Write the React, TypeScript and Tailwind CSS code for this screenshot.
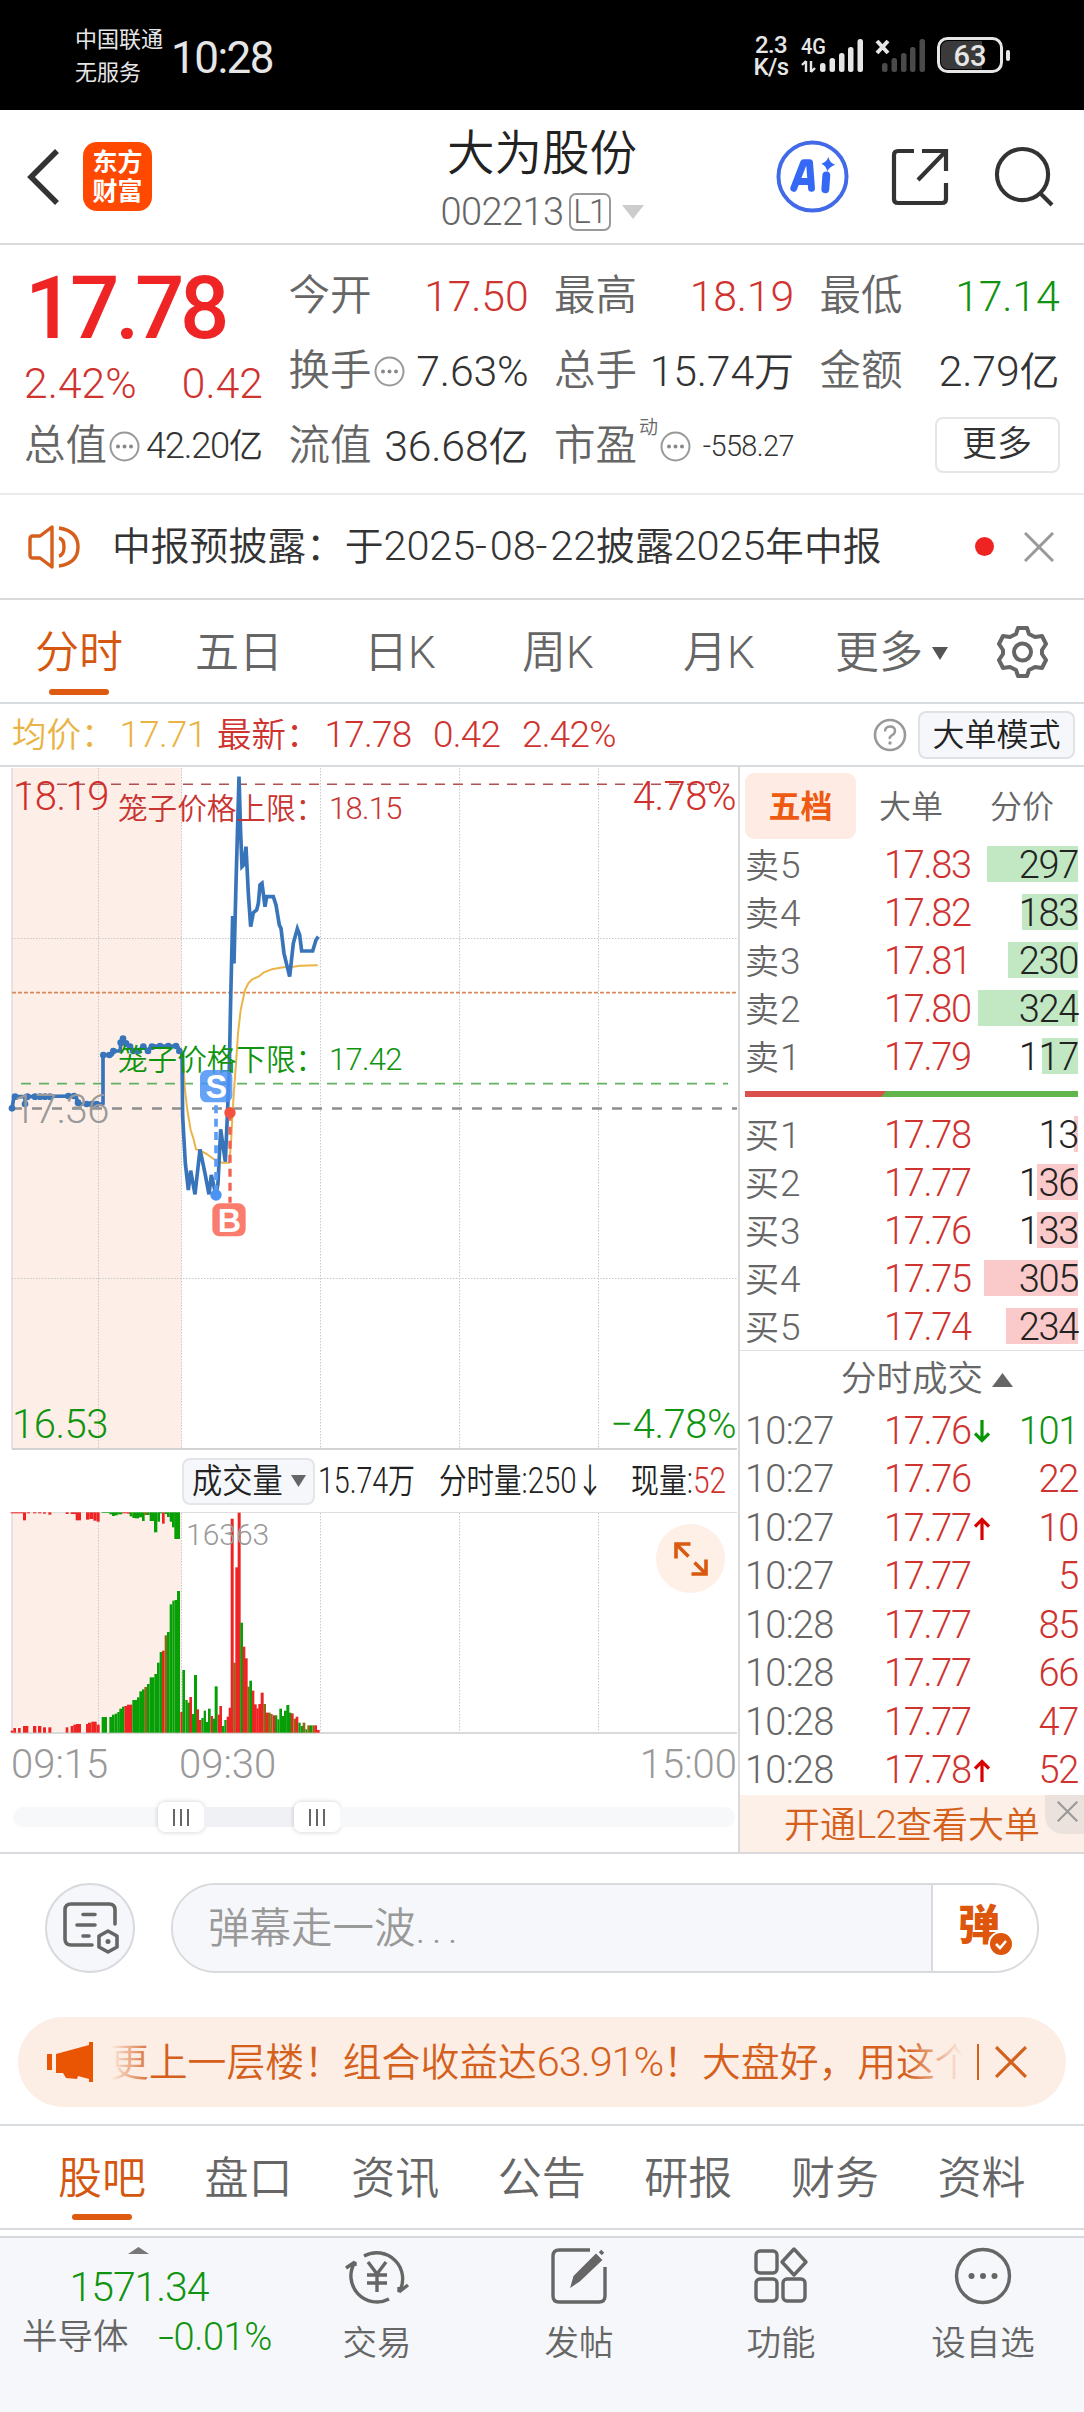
import React from "react";

type Bar = [number, number, number, "r" | "g" | "m"];

const BAR_FILL = { r: "#ee2424", g: "#069f06", m: "#8a6a14" };

const volumeBars: Bar[] = [
  [32, 8, 6, "r"], [40, 8, 14, "r"], [54, 8, 14, "r"], [69, 16, 20, "r"], [99, 10, 20, "r"], [114, 10, 20, "r"],
  [129, 9, 16, "r"], [145, 9, 16, "r"], [197, 8, 16, "r"], [212, 8, 20, "r"], [220, 8, 24, "r"], [228, 15, 26, "r"],
  [258, 6, 26, "r"], [264, 10, 30, "r"], [274, 16, 33, "r"], [290, 9, 24, "r"], [305, 16, 47, "g"], [328, 8, 47, "g"],
  [336, 8, 54, "g"], [344, 8, 57, "g"], [352, 7, 62, "g"], [358, 8, 72, "g"], [366, 7, 78, "g"], [373, 8, 80, "r"],
  [381, 16, 84, "r"], [397, 16, 98, "g"], [411, 8, 106, "g"], [418, 9, 124, "g"], [426, 8, 130, "g"], [433, 8, 137, "m"],
  [441, 8, 146, "g"], [449, 14, 166, "g"], [463, 8, 176, "g"], [471, 8, 210, "g"], [479, 8, 242, "g"], [486, 8, 246, "r"],
  [494, 8, 292, "m"], [501, 8, 302, "g"], [509, 8, 385, "g"], [517, 7, 396, "g"], [524, 8, 398, "g"], [531, 9, 425, "g"],
  [541, 7, 62, "r"], [547, 8, 188, "g"], [556, 7, 98, "g"], [562, 8, 90, "g"], [568, 8, 107, "r"], [576, 7, 56, "g"],
  [582, 9, 173, "g"], [590, 7, 70, "r"], [597, 7, 38, "r"], [604, 7, 44, "g"], [611, 7, 66, "g"], [618, 7, 32, "g"],
  [624, 8, 72, "g"], [632, 7, 50, "r"], [638, 7, 42, "g"], [644, 9, 139, "g"], [653, 7, 54, "r"], [658, 8, 80, "r"],
  [666, 7, 20, "g"], [673, 7, 38, "g"], [680, 7, 48, "r"], [686, 7, 75, "r"], [692, 9, 642, "r"], [700, 7, 210, "m"],
  [706, 8, 496, "r"], [713, 9, 660, "r"], [721, 8, 330, "g"], [728, 8, 258, "r"], [735, 8, 223, "r"], [742, 7, 138, "m"],
  [748, 8, 156, "g"], [756, 7, 126, "r"], [762, 8, 85, "r"], [769, 7, 73, "r"], [775, 8, 86, "r"], [782, 9, 120, "r"],
  [790, 8, 86, "m"], [797, 8, 60, "r"], [804, 8, 60, "m"], [811, 7, 56, "m"], [818, 8, 52, "r"], [825, 7, 52, "g"],
  [832, 6, 40, "g"], [838, 8, 72, "g"], [846, 7, 50, "g"], [852, 8, 66, "g"], [859, 9, 83, "g"], [867, 7, 60, "g"],
  [873, 8, 58, "r"], [881, 7, 42, "m"], [887, 8, 48, "r"], [895, 7, 30, "g"], [902, 7, 20, "g"], [908, 8, 30, "m"],
  [916, 6, 10, "g"], [922, 8, 22, "m"], [930, 7, 22, "g"], [937, 7, 22, "m"], [943, 8, 22, "r"], [951, 8, 8, "r"],
];

const hangingBars: Bar[] = [
  [32, 37, 3, "r"], [69, 9, 24, "r"], [80, 10, 3, "r"], [99, 10, 3, "r"], [114, 10, 3, "r"], [129, 9, 4, "r"],
  [145, 9, 7, "r"], [197, 9, 5, "r"], [212, 16, 5, "r"], [227, 16, 24, "r"], [258, 10, 22, "r"], [268, 12, 20, "r"],
  [280, 10, 25, "r"], [290, 9, 28, "r"], [305, 23, 2, "g"], [328, 8, 6, "g"], [336, 9, 11, "g"], [344, 9, 9, "g"],
  [352, 14, 6, "g"], [366, 15, 3, "r"], [381, 9, 4, "r"], [389, 8, 12, "g"], [397, 8, 17, "g"], [405, 12, 18, "g"],
  [417, 9, 15, "g"], [426, 8, 26, "g"], [433, 8, 8, "m"], [441, 8, 8, "g"], [449, 13, 26, "g"], [462, 10, 60, "g"],
  [472, 8, 28, "g"], [479, 7, 3, "g"], [486, 8, 34, "r"], [494, 7, 5, "g"], [501, 8, 14, "g"], [509, 8, 28, "g"],
  [516, 8, 45, "g"], [523, 17, 80, "g"],
];

const auctionLine =
  "36,1075 42,1040 75,1040 75,1062 78,1040 228,1038 234,1062 309,1062 309,915 336,915 342,903 360,903 363,878 369,864 378,882 390,890 396,903 414,903 430,890 444,903 453,888 532,888 540,903 546,912";
const auctionDots: [number, number][] = [
  [36, 1075], [45, 1040], [75, 1062], [82, 1040], [105, 1040], [120, 1040], [135, 1040], [150, 1040], [205, 1038],
  [222, 1038], [234, 1058], [260, 1062], [275, 1062], [290, 1062], [310, 915], [328, 915], [340, 903], [362, 878],
  [369, 866], [378, 880], [390, 890], [400, 903], [414, 903], [430, 890], [444, 903], [456, 890], [480, 888],
  [505, 888], [528, 888], [538, 903],
];
const priceLine =
  "546,912 548,1100 556,1240 565,1320 572,1262 585,1333 600,1198 615,1270 627,1333 634,1275 648,1335 654,1300 662,1138 676,1235 682,1100 688,950 692,750 698,498 702,640 708,400 717,80 722,250 726,350 731,345 738,290 745,430 752,530 760,488 770,480 775,460 780,405 786,400 795,470 800,440 820,440 828,465 838,525 843,535 852,610 869,680 880,580 892,536 899,555 905,603 938,603 948,570 955,560";
const averageLine =
  "548,912 555,1020 562,1080 572,1140 580,1165 588,1198 600,1202 620,1212 645,1230 665,1238 688,1238 693,1180 700,1050 708,940 714,850 722,780 735,720 745,700 757,688 775,680 790,668 815,658 850,652 880,650 900,647 953,646";

/* Digits sit slightly taller than the surrounding Chinese text. */
function N({ children, className = "tracking-[-0.004em]" }: { children: React.ReactNode; className?: string }) {
  return <span className={`text-[1.07em] ${className}`}>{children}</span>;
}

function Dots() {
  return (
    <svg className="h-[31px] w-[31px] shrink-0" viewBox="0 0 31 31">
      <circle cx="15.5" cy="15.5" r="14" fill="none" stroke="#999" strokeWidth="2" />
      <circle cx="9" cy="15.5" r="2" fill="#888" />
      <circle cx="15.5" cy="15.5" r="2" fill="#888" />
      <circle cx="22" cy="15.5" r="2" fill="#888" />
    </svg>
  );
}

function Close({ className }: { className: string }) {
  return (
    <svg className={className} viewBox="0 0 30 30" fill="none" stroke="currentColor" strokeWidth="3">
      <path d="M1 1L29 29M29 1L1 29" />
    </svg>
  );
}

function StatusBar() {
  return (
    <div className="flex h-[110px] items-start bg-black text-[#e6e6e6]">
      <div className="ml-[75px] mt-[23px] w-[96px] whitespace-nowrap text-[22px] font-normal leading-[33px]">
        <div>中国联通</div>
        <div>无服务</div>
      </div>
      <div className="mt-[34px] text-[44px] font-normal leading-[48px] tracking-[-0.035em]">10:28</div>
      <div className="ml-auto mt-[34px] w-[46px] text-center text-[24px] font-medium leading-[22px] tracking-tight">
        <div>2.3</div>
        <div>K/s</div>
      </div>
      <svg className="h-[110px] w-[220px]" viewBox="794 0 220 110" fill="#e6e6e6">
        <text x="801" y="54" fontSize="22" fontWeight="500" textLength="25" lengthAdjust="spacingAndGlyphs">4G</text>
        <path d="M806 61v11M802 65l4-4M811 61v11M815 68l-4 4" stroke="#e6e6e6" strokeWidth="2.4" fill="none" />
        {[0, 1, 2, 3, 4].map((i) => (
          <rect key={i} x={[820, 829.5, 839, 848, 857.5][i]} y={[63, 58, 53, 47, 39][i]} width="5.5" height={[9, 14, 19, 25, 33][i]} rx="2.5" />
        ))}
        <path d="M877 41l11 12M888 41l-11 12" stroke="#e6e6e6" strokeWidth="4" />
        {[0, 1, 2, 3, 4].map((i) => (
          <rect key={i} x={[882, 891.5, 901, 910, 919.5][i]} y={[63, 58, 53, 47, 39][i]} width="5.5" height={[9, 14, 19, 25, 33][i]} rx="2.5" fill="#4a4a4a" />
        ))}
        <rect x="938.5" y="38.5" width="63" height="33" rx="9" fill="none" stroke="#e6e6e6" strokeWidth="3" />
        <path d="M948 41h34v28h-34a7 7 0 0 1-7-7v-14a7 7 0 0 1 7-7z" fill="#3a3a3a" />
        <rect x="1006" y="50" width="4" height="11" rx="2" />
        <text x="970" y="65.5" fontSize="29" fontWeight="500" textAnchor="middle">63</text>
      </svg>
      <div className="w-[70px]" />
    </div>
  );
}

function Header() {
  return (
    <div className="flex h-[135px] items-center justify-between border-b-2 border-[#dadada] bg-white">
      <div className="flex w-[360px] items-center pl-[27px]">
        <svg className="h-[56px] w-[34px]" viewBox="0 0 34 56" fill="none" stroke="#333" strokeWidth="5.5">
          <path d="M30 2L4 28L30 54" />
        </svg>
        <div className="ml-[22px] flex h-[69px] w-[69px] flex-col items-center justify-center rounded-[14px] bg-[#ff4800] text-[25px] font-semibold leading-[29px] text-white">
          <div>东方</div>
          <div>财富</div>
        </div>
      </div>
      <div className="flex flex-col items-center pt-[5px]">
        <div className="text-[47.5px] leading-[58px] text-[#222]">大为股份</div>
        <div className="mt-[7px] flex items-center text-[#666]">
          <span className="text-[38px] leading-[44px] tracking-[-0.015em]">002213</span>
          <span className="ml-[5px] flex h-[38px] w-[42px] items-center justify-center rounded-[7px] border-2 border-[#999] text-[33px] tracking-[-0.05em]">L1</span>
          <svg className="ml-[11px] h-[14px] w-[22px]" viewBox="0 0 22 14"><path d="M0 0H22L11 14Z" fill="#ccc" /></svg>
        </div>
      </div>
      <div className="flex w-[360px] items-center justify-end pr-[29px]">
        <svg className="h-[73px] w-[73px]" viewBox="0 0 74 74">
          <circle cx="37" cy="37" r="34.5" fill="none" stroke="#4169e8" strokeWidth="4" />
          <path d="M18 49L28 23L34 23L36 49M21 42H35" fill="none" stroke="#3468f5" strokeWidth="7" strokeLinejoin="round" strokeLinecap="round" />
          <path d="M51 36L50 50" stroke="#3468f5" strokeWidth="8" strokeLinecap="round" />
          <path d="M53 17Q54 23 60 25Q54 27 52 32Q51 26 46 24Q52 22 53 17Z" fill="#3468f5" />
        </svg>
        <svg className="ml-[42px] h-[60px] w-[60px]" viewBox="0 0 60 60" fill="none" stroke="#333" strokeWidth="4.2">
          <path d="M23 4H7Q3 4 3 8V52Q3 56 7 56H51Q55 56 55 52V36" />
          <path d="M31 4H55V24M55 4L27 33" />
        </svg>
        <svg className="ml-[43px] h-[61px] w-[61px]" viewBox="0 0 62 62" fill="none" stroke="#333" strokeWidth="4.2">
          <circle cx="29" cy="29" r="26" />
          <path d="M47 48L59 60" />
        </svg>
      </div>
    </div>
  );
}

function Stat({ label, value, tone = "text-[#333]", size = "text-[40px]", icon = false, sup }: {
  label: string; value: React.ReactNode; tone?: string; size?: string; icon?: boolean; sup?: string;
}) {
  return (
    <div className="flex h-[75px] items-center justify-between whitespace-nowrap">
      <div className="-ml-px flex items-center text-[41.5px] text-[#666]">
        {label}
        {sup && <span className="mb-[38px] ml-[2px] text-[19px] leading-none">{sup}</span>}
        {icon && <div className="ml-[2px] flex"><Dots /></div>}
      </div>
      <div className={`${size} ${tone}`}>{value}</div>
    </div>
  );
}

const RED = "text-[#cf3330]";
const GREEN = "text-[#109410]";

function Quote() {
  return (
    <div className="grid h-[250px] grid-cols-[238px_239px_239px_239px] gap-x-[26.5px] border-b-2 border-[#ebebeb] bg-white pl-[25px] pt-[14px]">
      <div>
        <div className="flex h-[99px] items-center text-[87px] font-medium tracking-[-0.05em] text-[#ee2425]">
          <span>17.78</span>
        </div>
        <div className={`flex h-[51px] items-center justify-between text-[42.5px] tracking-[0.002em] ${RED}`}>
          <span className="-ml-px">2.42%</span>
          <span>0.42</span>
        </div>
        <Stat label="总值" icon size="text-[34px]" value={<><N className="tracking-[-0.035em]">42.20</N>亿</>} />
      </div>
      <div>
        <Stat label="今开" value={<N>17.50</N>} tone={RED} />
        <Stat label="换手" icon value={<N>7.63%</N>} />
        <Stat label="流值" value={<><N>36.68</N>亿</>} />
      </div>
      <div>
        <Stat label="最高" value={<N>18.19</N>} tone={RED} />
        <Stat label="总手" value={<><N>15.74</N>万</>} />
        <Stat label="市盈" sup="动" icon size="text-[27px]" value={<N className="tracking-[-0.02em]">-558.27</N>} />
      </div>
      <div>
        <Stat label="最低" value={<N>17.14</N>} tone={GREEN} />
        <Stat label="金额" value={<><N>2.79</N>亿</>} />
        <div className="flex h-[72px] items-center justify-end">
          <div className="flex h-[56px] w-[125px] items-center justify-center rounded-[8px] border-2 border-[#e6e6e6] text-[35px] text-[#333]">更多</div>
        </div>
      </div>
    </div>
  );
}

function Notice() {
  return (
    <div className="flex h-[105px] items-center border-b-2 border-[#dadada] bg-white pl-[28px]">
      <svg className="h-[46px] w-[54px]" viewBox="0 0 54 46" fill="none" stroke="#d55f1b" strokeWidth="3.4" strokeLinejoin="round">
        <path d="M24 3V43L12 34H5Q2 34 2 31V15Q2 12 5 12H12Z" />
        <path d="M31 14Q36 15 36 23T31 32" />
        <path d="M31 4Q50 7 50 23T31 42" />
      </svg>
      <div className="ml-[30px] whitespace-nowrap text-[38.8px] text-[#333]">
        中报预披露：于<N>2025</N><N className="tracking-[0.07em]">-</N><N>08</N><N className="tracking-[0.07em]">-</N><N>22</N>披露<N>2025</N>年中报
      </div>
      <div className="ml-auto h-[19px] w-[19px] rounded-full bg-[#f02323]" />
      <Close className="ml-[30px] mr-[30px] h-[30px] w-[30px] text-[#999]" />
    </div>
  );
}

function PeriodTabs() {
  return (
    <div className="flex h-[104px] items-center border-b-2 border-[#d9dcdf] bg-white pt-[4px] text-[44px] text-[#666]">
      <div className="relative ml-[35px] w-[160px] text-[#d5570f]">
        分时
        <div className="absolute -bottom-[9px] left-[14px] h-[6px] w-[60px] rounded-full bg-[#de5a10]" />
      </div>
      <div className="w-[169px]">五日</div>
      <div className="w-[158px]">日K</div>
      <div className="w-[161px]">周K</div>
      <div className="w-[152px]">月K</div>
      <div className="flex items-center">
        更多
        <svg className="ml-[9px] h-[13px] w-[16px]" viewBox="0 0 16 13"><path d="M0 0H16L8 13Z" fill="#555" /></svg>
      </div>
      <svg className="mb-[2px] ml-auto mr-[35px] h-[54px] w-[53px]" viewBox="0 0 53 54" fill="none" stroke="#666" strokeWidth="4">
        <path d="M22 3H31L33 9L39 12L46 11L50 19L46 25V29L50 35L46 43L39 42L33 45L31 51H22L20 45L14 42L7 43L3 35L7 29V25L3 19L7 11L14 12L20 9Z" strokeLinejoin="round" />
        <circle cx="26.5" cy="27" r="8.5" />
      </svg>
    </div>
  );
}

function InfoRow() {
  return (
    <div className="flex h-[63px] items-center whitespace-nowrap border-b-2 border-[#d9dcdf] bg-white text-[34.5px] text-[#cf3330]">
      <div className="ml-[12px] w-[205px] text-[#e9b445]">均价：<N className="ml-[4px] tracking-[-0.02em]">17.71</N></div>
      <div className="w-[216px]">最新：<N className="ml-[4px] tracking-[-0.02em]">17.78</N></div>
      <N className="w-[89px] tracking-[-0.02em]">0.42</N>
      <N className="tracking-[-0.02em]">2.42%</N>
      <svg className="ml-auto h-[34px] w-[34px]" viewBox="0 0 34 34">
        <circle cx="17" cy="17" r="15" fill="none" stroke="#999" strokeWidth="2.6" />
        <path d="M12 13.5Q12 8.5 17 8.5T22 13Q22 15.500 19 17.300T17 21" fill="none" stroke="#999" strokeWidth="2.4" />
        <circle cx="17" cy="25" r="1.700" fill="#999" />
      </svg>
      <div className="ml-[11px] mr-[9px] flex h-[48px] w-[157px] items-center justify-center rounded-[8px] border-2 border-[#dfe2e5] bg-[#f6f7fa] text-[32px] text-[#222]">大单模式</div>
    </div>
  );
}

function Grid({ y1, y2 }: { y1: number; y2: number }) {
  return (
    <g stroke="#c9c9c9" strokeDasharray="1.5 1.5">
      {[98.5, 181.5, 320.5, 459.5, 598.5].map((x) => <path key={x} d={`M${x} ${y1}V${y2}`} />)}
    </g>
  );
}

function PriceChart() {
  return (
    <svg className="block h-[683px] w-[738px]" viewBox="0 767 738 683">
      <rect x="12" y="768" width="169.500" height="681" fill="#fdeee7" />
      <path d="M12 768V1449" stroke="#ddd" strokeWidth="1.500" />
      <Grid y1={768} y2={1449} />
      <g stroke="#c9c9c9" strokeDasharray="1.5 1.5"><path d="M12 938.500H737M12 1278.500H737" /></g>
      <path d="M21 784.300H729" stroke="#b05050" strokeWidth="1.600" strokeDasharray="10 8" />
      <path d="M12 992.700H737" stroke="#d98a5c" strokeWidth="1.800" strokeDasharray="4 2" />
      <path d="M21 1083.700H728" stroke="#62b062" strokeWidth="1.800" strokeDasharray="10 8" />
      <path d="M12 1108.500H737" stroke="#8d8d8d" strokeWidth="2.600" strokeDasharray="10 10" />
      <path d="M12 1449H737" stroke="#d2d2d2" strokeWidth="2" />
      <g transform="translate(0 750) scale(.33333)" fill="none">
        <polyline points={averageLine} stroke="#ebb448" strokeWidth="6" strokeLinejoin="round" />
        <polyline points={auctionLine} stroke="#3874ba" strokeWidth="11" strokeLinejoin="round" />
        {auctionDots.map(([x, y]) => <circle key={`${x}-${y}`} cx={x} cy={y} r="10" fill="#3874ba" />)}
        <polyline points={priceLine} stroke="#3874ba" strokeWidth="11" />
      </g>
      <g fontSize="40" letterSpacing="-.5">
        <text x="13" y="809.500" fill="#d0302d">18.19</text>
        <text x="736" y="809.500" textAnchor="end" fill="#d0302d">4.78%</text>
        <text x="13" y="1123" fill="#999">17.36</text>
        <text x="12" y="1437.500" fill="#109410">16.53</text>
        <text x="736" y="1437.500" textAnchor="end" fill="#109410">−4.78%</text>
      </g>
      <g fontSize="29.600">
        <text x="118" y="818.500" fill="#c93532">笼子价格上限：</text>
        <text x="329" y="819" fontSize="31" letterSpacing="-.7" fill="#c93532">18.15</text>
        <text x="118" y="1069.500" fill="#109410">笼子价格下限：</text>
        <text x="329" y="1070" fontSize="31" letterSpacing="-.7" fill="#109410">17.42</text>
      </g>
      <g transform="translate(0 750) scale(.33333)">
        <path d="M648 1066V1335" stroke="#5d9df5" strokeWidth="11" strokeDasharray="24 16" />
        <circle cx="648" cy="1335" r="17" fill="#4b92f5" />
        <rect x="600" y="960" width="97" height="97" rx="20" fill="#4b92f5" fillOpacity=".85" />
        <path d="M690 1088V1358" stroke="#f06353" strokeWidth="10" strokeDasharray="24 18" />
        <circle cx="690" cy="1088" r="17" fill="#f2523f" />
        <rect x="637" y="1360" width="100" height="99" rx="22" fill="#f97c6c" />
        <text x="648.500" y="1044" fontSize="97" fontWeight="700" textAnchor="middle" fill="#fff" className="font-['Liberation_Sans',sans-serif]">S</text>
        <text x="688" y="1446" fontSize="97" fontWeight="700" textAnchor="middle" fill="#fff" className="font-['Liberation_Sans',sans-serif]">B</text>
      </g>
    </svg>
  );
}

function VolumeHeader() {
  return (
    <div className="flex h-[62px] items-center overflow-hidden whitespace-nowrap text-[34px] text-[#222]">
      <div className="ml-[182px] flex h-[47px] w-[133px] shrink-0 items-center rounded-[8px] border-2 border-[#e3e5e8] bg-[#f6f7fa] pl-[8px]">
        <div className="w-[99px] shrink-0"><span className="inline-block origin-left scale-x-[0.89]">成交量</span></div>
        <svg className="h-[12px] w-[15px] shrink-0" viewBox="0 0 15 12"><path d="M0 0H15L7.500 12Z" fill="#666" /></svg>
      </div>
      <div className="ml-[3px] w-[121px] shrink-0"><span className="inline-block origin-left scale-x-[0.79]"><N>15.74</N>万</span></div>
      <div className="w-[192px] shrink-0"><span className="inline-block origin-left scale-x-[0.81]">分时量<N>:250</N>↓</span></div>
      <div className="shrink-0"><span className="inline-block origin-left scale-x-[0.82]">现量<N>:</N><N className="text-[#cf3330]">52</N></span></div>
    </div>
  );
}

function VolumeChart() {
  return (
    <div className="relative">
      <svg className="block h-[223px] w-[738px]" viewBox="0 1512 738 223">
        <rect x="12" y="1512" width="169.500" height="221" fill="#fdeee7" />
        <path d="M12 1512V1733" stroke="#ddd" strokeWidth="1.500" />
        <path d="M12 1512.500H737" stroke="#dedede" />
        <Grid y1={1513} y2={1733} />
        <path d="M12 1733H737" stroke="#dadada" strokeWidth="2" />
        <g transform="translate(0 1430) scale(.33333)">
          {volumeBars.map(([x, w, h, c]) => <rect key={x} x={x} y={908 - h} width={w} height={h} fill={BAR_FILL[c]} />)}
          {hangingBars.map(([x, w, h, c]) => <rect key={x} x={x} y={247} width={w} height={h} fill={BAR_FILL[c]} />)}
        </g>
        <text x="186" y="1545" fontSize="30" fill="#999">16363</text>
      </svg>
      <div className="absolute right-[13px] top-[12px] flex h-[69px] w-[69px] items-center justify-center rounded-full bg-[#feefe7]">
        <svg className="h-[34px] w-[34px]" viewBox="0 0 34 34" fill="none" stroke="#d9590f" strokeWidth="3.6">
          <path d="M16.500 2H2V16.500M2 2L14.500 14.500M32 17.500V32H17.500M32 32L20.500 20.500" />
        </svg>
      </div>
    </div>
  );
}

function Handle() {
  return (
    <div className="flex h-[30px] w-[46px] items-center justify-center gap-[4.500px] rounded-[7px] bg-white shadow-[0_0_5px_rgba(0,0,0,0.2)]">
      <div className="h-[17px] w-[2.500px] bg-[#666]" />
      <div className="h-[17px] w-[2.500px] bg-[#666]" />
      <div className="h-[17px] w-[2.500px] bg-[#666]" />
    </div>
  );
}

function ChartPanel() {
  return (
    <div className="w-[738px]">
      <PriceChart />
      <VolumeHeader />
      <VolumeChart />
      <div className="mt-[6px] flex h-[48px] items-center pl-[11px] pr-px text-[40px] text-[#999]">
        <div className="w-[168px]">09:15</div>
        <div>09:30</div>
        <div className="ml-auto">15:00</div>
      </div>
      <div className="mt-[13px] flex h-[30px] items-center pl-[13px] pr-[3px]">
        <div className="h-[20px] w-[145px] rounded-l-full bg-[#f7f8fa]" />
        <Handle />
        <div className="h-[20px] w-[90px] bg-[#f0f1f4]" />
        <Handle />
        <div className="h-[20px] flex-1 rounded-r-full bg-[#f7f8fa]" />
      </div>
    </div>
  );
}

const asks: [string, string, string, number][] = [
  ["5", "17.83", "297", 91], ["4", "17.82", "183", 56], ["3", "17.81", "230", 70], ["2", "17.80", "324", 100], ["1", "17.79", "117", 36],
];
const bids: [string, string, string, number][] = [
  ["1", "17.78", "13", 4], ["2", "17.77", "136", 41], ["3", "17.76", "133", 41], ["4", "17.75", "305", 94], ["5", "17.74", "234", 72],
];
const trades: [string, string, string, string][] = [
  ["10:27", "17.76", "down", "101"], ["10:27", "17.76", "", "22"], ["10:27", "17.77", "up", "10"], ["10:27", "17.77", "", "5"],
  ["10:28", "17.77", "", "85"], ["10:28", "17.77", "", "66"], ["10:28", "17.77", "", "47"], ["10:28", "17.78", "up", "52"],
];

function Level({ side, row, fill }: { side: string; row: [string, string, string, number]; fill: string }) {
  const [n, price, qty, width] = row;
  return (
    <div className="relative flex h-[48px] items-center pl-[5px] pr-[6px] text-[38px] tracking-[-0.035em]">
      <div className={`absolute right-[6px] top-[5px] h-[36px] ${fill}`} style={{ width }} />
      <div className="w-[139px] text-[#666]"><span className="text-[34px] tracking-normal">{side}</span><span className="ml-px text-[37px]">{n}</span></div>
      <div className={RED}>{price}</div>
      <div className="relative ml-auto text-[#222]">{qty}</div>
    </div>
  );
}

function OrderBook() {
  return (
    <div className="w-[346px] border-l-2 border-[#d9d9d9]">
      <div className="mb-[2px] flex h-[72px] items-end pl-[5px] text-[32px] text-[#666]">
        <div className="flex h-[66px] w-[111px] items-center justify-center rounded-[9px] bg-[#feece4] pt-[2px] font-bold text-[#ee5a12]">五档</div>
        <div className="flex h-[66px] w-[110px] items-center justify-center pt-[2px]">大单</div>
        <div className="flex h-[66px] w-[112px] items-center justify-center pt-[2px]">分价</div>
      </div>
      {asks.map((r) => <Level key={r[0]} side="卖" row={r} fill="bg-[#c1e7c3]" />)}
      <svg className="ml-[5px] mt-[10px] block h-[6px] w-[333px]" viewBox="0 0 333 6">
        <rect width="333" height="6" fill="#62b54b" />
        <path d="M0 0H141L136 6H0Z" fill="#d9504c" />
      </svg>
      <div className="mt-[14px] h-[240px] border-b border-[#e0e0e0]">
        {bids.map((r) => <Level key={r[0]} side="买" row={r} fill="bg-[#fac9c9]" />)}
      </div>
      <div className="flex h-[56px] items-center pl-[101px] pt-px text-[35.500px] text-[#666]">
        分时成交
        <svg className="ml-[9px] h-[14px] w-[21px]" viewBox="0 0 21 14"><path d="M0 14H21L10.500 0Z" fill="#666" /></svg>
      </div>
      {trades.map(([time, price, dir, qty], i) => (
        <div key={i} className="flex h-[48.500px] items-center pl-[5px] pr-[6px] text-[38px] tracking-[-0.035em]">
          <div className="w-[139px] tracking-[-0.02em] text-[#666]">{time}</div>
          <div className={`w-[90px] ${RED}`}>{price}</div>
          {dir && (
            <svg className={dir === "up" ? "h-[23px] w-[16px] text-[#d80000]" : "h-[23px] w-[16px] rotate-180 text-[#069606]"} viewBox="0 0 16 23" fill="none" stroke="currentColor" strokeWidth="3.200">
              <path d="M8 23V2M1 9.500L8 2.500L15 9.500" />
            </svg>
          )}
          <div className={`ml-auto ${i === 0 ? GREEN : RED}`}>{qty}</div>
        </div>
      ))}
      <div className="relative flex h-[59px] items-center justify-center bg-[#fdf0e9] text-[36px] text-[#d5601c]">
        <div>开通<N className="tracking-[-0.02em]">L2</N>查看大单</div>
        <div className="absolute right-0 top-0 flex h-[39px] w-[39px] items-center justify-center rounded-bl-[18px] bg-[#ece2dd]">
          <Close className="ml-[6px] mb-[6px] h-[21px] w-[21px] text-[#999]" />
        </div>
      </div>
    </div>
  );
}

function CommentBar() {
  return (
    <div className="flex h-[148px] items-center bg-white pl-[45px]">
      <div className="flex h-[90px] w-[90px] items-center justify-center rounded-full border-2 border-[#d8dbde] bg-[#f6f7fa]">
        <svg className="ml-[2px] h-[52px] w-[56px]" viewBox="0 0 56 52" fill="none" stroke="#666" strokeWidth="3.600" strokeLinecap="round">
          <path d="M29 43H8Q2 43 2 37V8Q2 2 8 2H46Q52 2 52 8V22" />
          <path d="M20 12.500H32M14 23H32M20 34H26" />
          <path d="M45 29L54 34V45L45 50L36 45V34Z" strokeLinejoin="round" />
          <circle cx="45" cy="39.500" r="2.500" fill="#666" stroke="none" />
        </svg>
      </div>
      <div className="ml-[36px] flex h-[90px] w-[868px] overflow-hidden rounded-full border-2 border-[#d8dbde]">
        <div className="flex flex-1 items-center bg-[#f6f7fa] pl-[35px] pt-[2px] text-[41.5px] text-[#999]">弹幕走一波<span className="tracking-[0.15em]">...</span></div>
        <div className="relative w-[106px] border-l-2 border-[#d8dbde] bg-white pl-[25px] text-[42px] font-black leading-[82px] text-[#de560c]">
          弹
          <svg className="absolute left-[55px] top-[46px] h-[26px] w-[26px]" viewBox="0 0 26 26">
            <circle cx="13" cy="13" r="12" fill="#de560c" stroke="#fff" strokeWidth="2" />
            <path d="M8 13L12 17L18 10" fill="none" stroke="#fff" strokeWidth="2.600" />
          </svg>
        </div>
      </div>
    </div>
  );
}

function Banner() {
  return (
    <div className="border-b-2 border-[#d9dce0] bg-white px-[18px] pb-[17px] pt-[15px]">
      <div className="flex h-[90px] items-center rounded-full bg-[#fceee5] text-[#d5601c]">
        <svg className="ml-[29px] h-[40px] w-[46px]" viewBox="0 0 46 40" fill="#ea5504">
          <path d="M0 12H5V28H0ZM9 12L42 3V0H46V40H42V37L31 34L30 37L19 36L16 31H9Z" />
        </svg>
        <div className="relative ml-[17px] w-[853px] overflow-hidden whitespace-nowrap text-[38.800px]">
          更上一层楼！组合收益达<N className="tracking-[-0.025em]">63.91%</N>！大盘好，用这个
          <div className="absolute left-0 top-0 h-full w-[44px] bg-linear-to-r from-[#fceee5] to-transparent" />
          <div className="absolute right-0 top-0 h-full w-[56px] bg-linear-to-l from-[#fceee5] to-transparent" />
        </div>
        <div className="ml-[14px] h-[36px] w-[1.500px] bg-[#d5601c]" />
        <Close className="ml-[16px] h-[32px] w-[32px]" />
      </div>
    </div>
  );
}

function SectionTabs() {
  return (
    <div className="flex h-[104px] items-center border-b-2 border-[#d9d9de] bg-white pl-[58px] pt-[4px] text-[44px] text-[#666]">
      {["股吧", "盘口", "资讯", "公告", "研报", "财务", "资料"].map((t, i) =>
        i === 0 ? (
          <div key={t} className="relative w-[146.700px] text-[#d5570f]">
            {t}
            <div className="absolute -bottom-[8px] left-[14px] h-[6px] w-[60px] rounded-full bg-[#de5a10]" />
          </div>
        ) : (
          <div key={t} className="w-[146.700px]">{t}</div>
        ),
      )}
    </div>
  );
}

function BottomBar() {
  const items: [string, React.ReactNode][] = [
    ["交易", <g key="a"><path d="M17 10A26 26 0 0 1 52 46V41M52 46L61 39M42 53A26 26 0 0 1 8 16V20M8 16L-1 22" strokeLinejoin="bevel" /><path d="M21 16L30 28L39 16M20 29H40M20 37H40M30 28V46" /></g>],
    ["发帖", <g key="b"><path d="M41 4H10Q4 4 4 10V50Q4 56 10 56H50Q56 56 56 50V21" /><path d="M24 38L26 31L47 10L51 14L30 34ZM51 5L54 8" fill="#666" /></g>],
    ["功能", <g key="c"><rect x="5" y="5" width="21" height="22" rx="4" /><rect x="5" y="33" width="21" height="22" rx="4" /><rect x="32" y="33" width="22" height="22" rx="4" /><path d="M43 3L55 16L43 29L31 16Z" strokeLinejoin="round" /></g>],
    ["设自选", <g key="d"><circle cx="30" cy="30" r="26.500" /><g fill="#666" stroke="none"><circle cx="18.500" cy="30" r="3" /><circle cx="30" cy="30" r="3" /><circle cx="41.500" cy="30" r="3" /></g></g>],
  ];
  return (
    <div className="mt-[6px] flex h-[177px] border-t-2 border-[#d6d8de] bg-[#f6f7fa]">
      <div className="flex w-[276px] flex-col items-center pt-[9px]">
        <svg className="h-[7px] w-[21px]" viewBox="0 0 21 7"><path d="M0 7H21L10.500 0Z" fill="#777" /></svg>
        <div className="mt-[8px] pl-[2px] text-[41px] leading-[50px] tracking-[-0.025em] text-[#109410]">1571.34</div>
        <div className="flex items-center self-stretch pl-[22px] text-[35.5px] leading-[50px] text-[#666]">
          半导体
          <span className="ml-[29px] text-[38px] tracking-[-0.01em] text-[#109410]"><span className="inline-block w-[16px] origin-left scale-x-[1.5]">-</span>0.01%</span>
        </div>
      </div>
      {items.map(([label, icon]) => (
        <div key={label} className="flex w-[202px] flex-col items-center pt-[8px]">
          <svg className="h-[60px] w-[60px] overflow-visible" viewBox="0 0 60 60" fill="none" stroke="#666" strokeWidth="3.400">{icon}</svg>
          <div className="mt-[11px] text-[34.500px] leading-[52px] text-[#666]">{label}</div>
        </div>
      ))}
    </div>
  );
}

export default function App() {
  return (
    <div className="h-[2412px] w-[1084px] overflow-hidden bg-white font-[Roboto,'Noto_Sans_CJK_SC',sans-serif] font-[350]">
      <StatusBar />
      <Header />
      <Quote />
      <Notice />
      <PeriodTabs />
      <InfoRow />
      <div className="flex h-[1087px] overflow-hidden border-b-2 border-[#d9d9de]">
        <ChartPanel />
        <OrderBook />
      </div>
      <CommentBar />
      <Banner />
      <SectionTabs />
      <BottomBar />
    </div>
  );
}
